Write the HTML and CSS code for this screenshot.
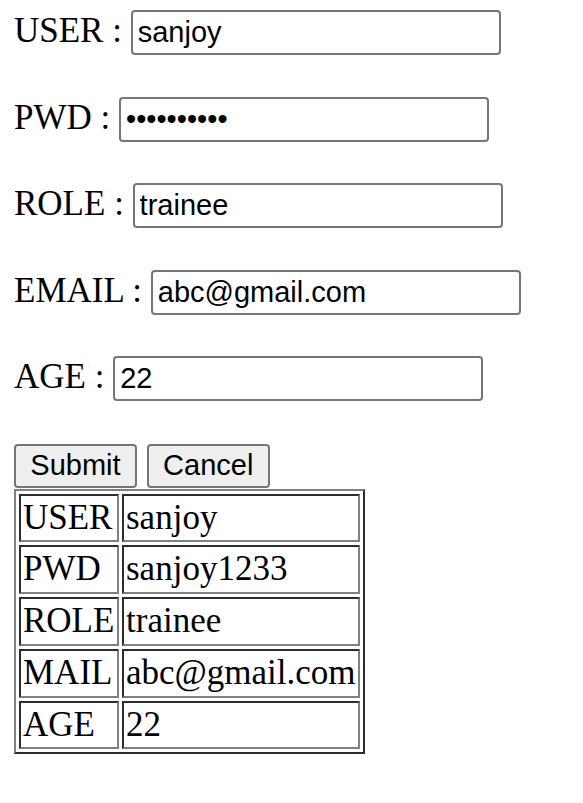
FILE: index.html
```html
<!DOCTYPE html>
<html>
<head>
<meta charset="utf-8">
<link rel="stylesheet" href="styles.css">
</head>
<body>
<form class="form">
  <div class="row">USER : <input class="field" type="text" value="sanjoy"></div>
  <div class="row">PWD : <input class="field" type="password" value="sanjoy1233"></div>
  <div class="row">ROLE : <input class="field" type="text" value="trainee"></div>
  <div class="row">EMAIL : <input class="field" type="text" value="abc@gmail.com"></div>
  <div class="row">AGE : <input class="field" type="text" value="22"></div>
  <div class="buttons"><button type="button" class="btn">Submit</button> <button type="button" class="btn btn-second">Cancel</button></div>
</form>
<table class="data">
  <tr><td class="key">USER</td><td>sanjoy</td></tr>
  <tr><td class="key">PWD</td><td>sanjoy1233</td></tr>
  <tr><td class="key">ROLE</td><td>trainee</td></tr>
  <tr><td class="key">MAIL</td><td>abc@gmail.com</td></tr>
  <tr><td class="key">AGE</td><td>22</td></tr>
</table>
</body>
</html>
```
FILE: styles.css
```css
html, body {
  background: #ffffff;
}
body {
  margin: 0;
  padding: 10px 14px 0 14px;
  font-family: "Liberation Serif", "Times New Roman", serif;
  font-size: 35px;
  color: #000000;
}
.form {
  margin: 0;
}
.row {
  height: 86.5px;
  white-space: nowrap;
}
.field {
  box-sizing: border-box;
  width: 370px;
  height: 45px;
  margin: 0;
  padding: 2px 5px;
  font-family: "Liberation Sans", Arial, sans-serif;
  font-size: 29px;
  color: #000000;
  background: #ffffff;
  border: 2px solid #767676;
  border-radius: 4px;
  vertical-align: baseline;
}
.buttons {
  white-space: nowrap;
  line-height: 1;
  height: 45px;
  padding-top: 1px;
}
.btn {
  box-sizing: border-box;
  height: 44px;
  width: 123px;
  margin: 0;
  padding: 2px 10px;
  font-family: "Liberation Sans", Arial, sans-serif;
  font-size: 29px;
  color: #000000;
  background: #efefef;
  border: 2px solid #767676;
  border-radius: 4px;
  vertical-align: top;
}
.btn-second {
  margin-left: 1px;
}
.data {
  border: 2px outset #808080;
  border-spacing: 3px;
  margin: 0;
}
.data td {
  border: 2px inset #808080;
  padding: 2px;
  line-height: 40.8px;
  white-space: nowrap;
}
.data .key {
  width: 92px;
}
```
